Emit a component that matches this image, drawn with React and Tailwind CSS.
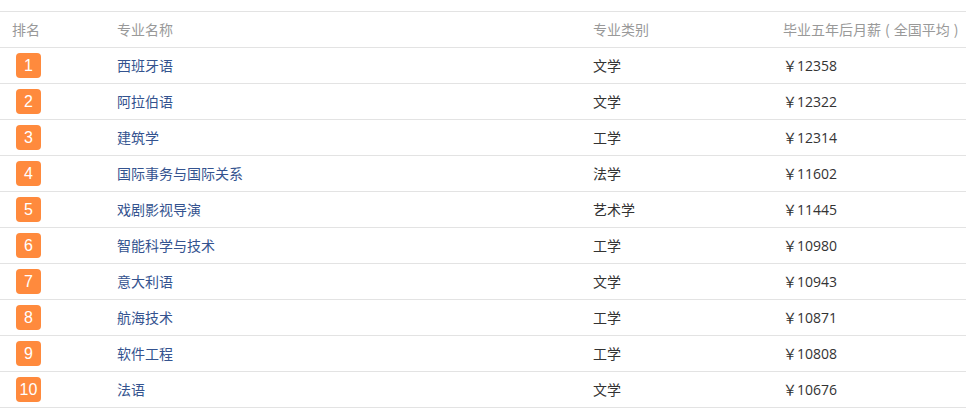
import React from 'react';

const rows = [
	{ name: '西班牙语', type: '文学', pay: '12358' },
	{ name: '阿拉伯语', type: '文学', pay: '12322' },
	{ name: '建筑学', type: '工学', pay: '12314' },
	{ name: '国际事务与国际关系', type: '法学', pay: '11602' },
	{ name: '戏剧影视导演', type: '艺术学', pay: '11445' },
	{ name: '智能科学与技术', type: '工学', pay: '10980' },
	{ name: '意大利语', type: '文学', pay: '10943' },
	{ name: '航海技术', type: '工学', pay: '10871' },
	{ name: '软件工程', type: '工学', pay: '10808' },
	{ name: '法语', type: '文学', pay: '10676' },
];

const cols = 'grid grid-cols-[105px_476px_190px_1fr] h-9 items-center border-b border-[#e3e3e3]';

const App = () => {
	return (
		<div className="w-[966px] h-[412px] bg-white pt-[11px] text-[14px] font-['Noto_Sans_CJK_SC','Noto_Sans',sans-serif]">
			<div className="border-t border-[#e3e3e3]">
				{/* header */}
				<div className={cols + ' text-[#999]'}>
					<div className="pl-3">排名</div>
					<div className="pl-3">专业名称</div>
					<div className="pl-3">专业类别</div>
					<div className="pl-3 whitespace-nowrap">
						毕业五年后月薪<span className="mx-[4px]">(</span>全国平均<span className="mx-[4px]">)</span>
					</div>
				</div>

				{rows.map((r, i) => (
					<div key={i} className={cols}>
						<div className="pl-4">
							<span className="flex items-center justify-center w-[25px] h-[25px] rounded-[4px] bg-[#ff8a3d] text-white text-[16px] font-['Liberation_Sans',sans-serif]">
								{i + 1}
							</span>
						</div>
						<div className="pl-3 text-[#34538f]">{r.name}</div>
						<div className="pl-3 text-[#333]">{r.type}</div>
						<div className="pl-3 text-[#333] font-['Open_Sans','Noto_Sans_CJK_SC',sans-serif]">￥{r.pay}</div>
					</div>
				))}
			</div>
		</div>
	);
};

export default App;
